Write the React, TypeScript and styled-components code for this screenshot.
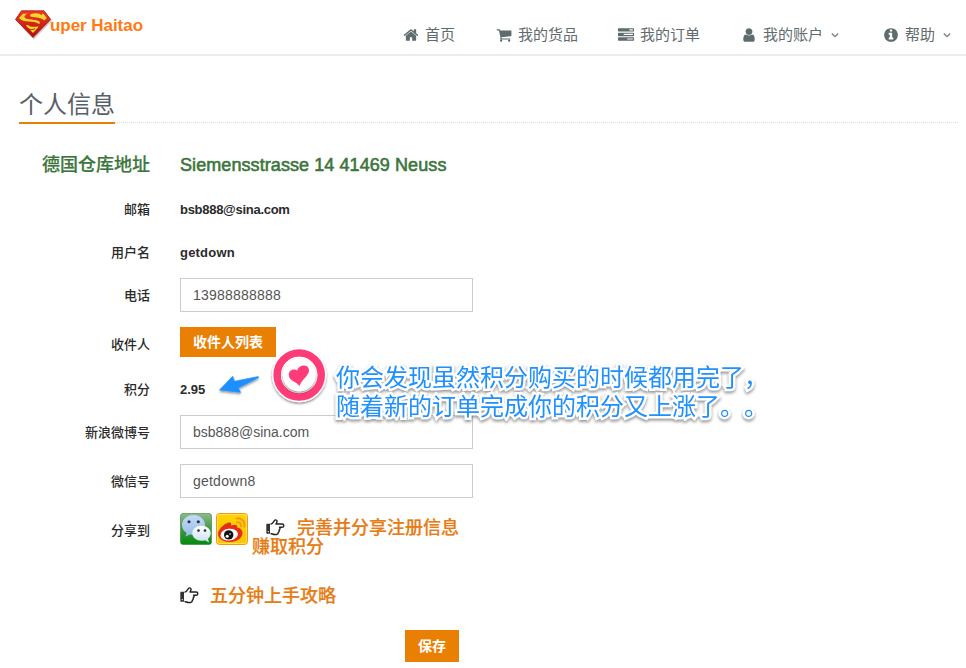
import React from "react";
import styled, { createGlobalStyle, css } from "styled-components";

const Global = createGlobalStyle`
  * { box-sizing: border-box; }
  body {
    margin: 0;
    background: #fff;
    color: #2a2a2a;
    font-family: "Liberation Sans", "Noto Sans CJK SC", sans-serif;
    overflow: hidden;
  }
`;

const Page = styled.div`
  position: relative;
  width: 966px;
  height: 668px;
  overflow: hidden;
`;

const Header = styled.header`
  display: flex;
  justify-content: space-between;
  height: 56px;
  border-bottom: 2px solid #ececec;
`;

const Brand = styled.a`
  display: flex;
  align-items: flex-start;
  padding: 9px 0 0 14px;
`;

const BrandName = styled.span`
  margin: 7px 0 0 -2px;
  font-size: 17px;
  line-height: 20px;
  font-weight: 700;
  letter-spacing: -0.05px;
  color: #ff7a12;
`;

const Nav = styled.nav`
  display: flex;
  align-items: center;
  height: 38px;
  margin-top: 16px;
  padding-right: 15px;
`;

const NavItem = styled.a<{ $gap: number }>`
  display: flex;
  align-items: center;
  margin-left: ${(p) => p.$gap}px;
  font-size: 15px;
  line-height: 20px;
  color: #5f6b6d;
  white-space: nowrap;

  svg { display: block; flex: none; }
  svg:last-child:not(:first-child) { margin-left: 8px; }
`;

const NavIcon = styled.svg`
  width: 16px;
  height: 16px;
  margin: -1px 6px 0 0;
  fill: #5f6b6d;
`;

const Headline = styled.div`
  display: flex;
  height: 38px;
  margin: 30px 7px 0 19px;
  background: linear-gradient(90deg, #dcdcdc 50%, transparent 50%) 0 36px / 2px 1px repeat-x;
`;

const Title = styled.h2`
  margin: 0;
  height: 38px;
  border-bottom: 2px solid #e98003;
  font-size: 24px;
  line-height: 37px;
  font-weight: 400;
  color: #585f69;
`;

const Form = styled.form`
  display: flex;
  flex-direction: column;
  gap: 15px;
  padding-top: 29px;
`;

const Row = styled.div<{ $height: number }>`
  display: grid;
  grid-template-columns: 150px 293px;
  column-gap: 30px;
  height: ${(p) => p.$height}px;
`;

const address = css`
  padding-top: 0;
  font-size: 18px;
  line-height: 24px;
  font-weight: 500;
  color: #3c763d;
`;

const Label = styled.label<{ $address?: boolean }>`
  padding-top: 7px;
  text-align: right;
  font-size: 13px;
  line-height: 21px;
  font-weight: 500;
  white-space: nowrap;
  ${(p) => p.$address && address}
  ${(p) => p.$address && "-webkit-text-stroke: 0.2px #3c763d;"}
`;

const Value = styled.p<{ $address?: boolean; $spacing?: number }>`
  margin: 0;
  padding-top: 7px;
  font-size: 13px;
  line-height: 21px;
  font-weight: 700;
  white-space: nowrap;
  ${(p) => p.$address && address}
  ${(p) => p.$address && "-webkit-text-stroke: 0.6px #3c763d;"}
  letter-spacing: ${(p) => p.$spacing ?? 0}px;
`;

const Input = styled.input<{ $spacing?: number }>`
  width: 293px;
  height: 34px;
  padding: 0 12px;
  border: 1px solid #ccc;
  border-radius: 0;
  outline: 0;
  font: 14px "Liberation Sans", sans-serif;
  letter-spacing: ${(p) => p.$spacing ?? 0.22}px;
  color: #555;
`;

const Button = styled.button<{ $width: number; $height: number }>`
  width: ${(p) => p.$width}px;
  height: ${(p) => p.$height}px;
  padding: 0 0 2px;
  border: 0;
  background: #e98003;
  color: #fff;
  font: 700 14px/20px "Noto Sans CJK SC", sans-serif;
  white-space: nowrap;
`;

const Share = styled.div`
  display: flex;
  gap: 4px;
  width: 300px;
  > svg { flex: none; display: block; }
`;

const tipText = css`
  font-size: 18px;
  line-height: 19px;
  font-weight: 500;
  color: #e67c14;
  -webkit-text-stroke: 0.2px #e67c14;
  white-space: nowrap;
`;

const Tip = styled.div`
  padding-top: 5px;
  ${tipText}
`;

const TipLine = styled.div<{ $indent?: number }>`
  display: flex;
  align-items: center;
  height: 19px;
  padding-left: ${(p) => p.$indent ?? 0}px;
  svg { flex: none; margin-right: 12px; }
`;

const TipText = styled.span`
  padding-top: 2px;
`;

const Guide = styled.div`
  padding: 26px 0 0 180px;
  ${tipText}
  svg { margin-right: 11px; }
`;

const Actions = styled.div`
  display: flex;
  justify-content: flex-end;
  width: 459px;
  padding-top: 10px;
`;

const Callout = styled.div`
  position: absolute;
  left: 336px;
  top: 363px;
  font-size: 24px;
  line-height: 29px;
  color: #1e90ff;
  white-space: nowrap;
  text-spacing-trim: space-all;
  -webkit-text-stroke: 5px #fff;
  paint-order: stroke fill;
  filter: drop-shadow(0 2px 1.5px rgba(0, 0, 0, 0.4));
`;

const Marks = styled.svg`
  position: absolute;
  left: 210px;
  top: 340px;
  overflow: visible;
`;

const icons = {
  home: "M1472 992v480q0 26-19 45t-45 19h-384v-384h-256v384h-384q-26 0-45-19t-19-45v-480q0-1 .5-3t.5-3l575-474 575 474q1 2 1 6zm223-69l-62 74q-8 9-21 11h-3q-13 0-21-7l-692-577-692 577q-12 8-24 7-13-2-21-11l-62-74q-8-10-7-23.5t11-21.5l719-599q32-26 76-26t76 26l244 204v-195q0-14 9-23t23-9h192q14 0 23 9t9 23v408l219 182q10 8 11 21.5t-7 23.5z",
  cart: "M704 1536q0 52-38 90t-90 38-90-38-38-90 38-90 90-38 90 38 38 90zm896 0q0 52-38 90t-90 38-90-38-38-90 38-90 90-38 90 38 38 90zm128-1088v512q0 24-16.5 42.5t-40.5 21.5l-1044 122q13 60 13 70 0 16-24 64h920q26 0 45 19t19 45-19 45-45 19h-1024q-26 0-45-19t-19-45q0-11 8-31.5t16-36 21.5-40 15.5-29.5l-177-823h-204q-26 0-45-19t-19-45 19-45 45-19h256q16 0 28.5 6.5t19.5 15.5 13 24.5 8 26 5.5 29.5 4.5 26h1201q26 0 45 19t19 45z",
  tasks: "M1024 1408h640v-128h-640v128zm-384-512h1024v-128h-1024v128zm640-512h384v-128h-384v128zm512 832v256q0 26-19 45t-45 19h-1664q-26 0-45-19t-19-45v-256q0-26 19-45t45-19h1664q26 0 45 19t19 45zm0-512v256q0 26-19 45t-45 19h-1664q-26 0-45-19t-19-45v-256q0-26 19-45t45-19h1664q26 0 45 19t19 45zm0-512v256q0 26-19 45t-45 19h-1664q-26 0-45-19t-19-45v-256q0-26 19-45t45-19h1664q26 0 45 19t19 45z",
  user: "M1536 1399q0 109-62.5 187t-150.5 78h-854q-88 0-150.5-78t-62.5-187q0-85 8.5-160.5t31.5-152 58.5-131 94-89 134.5-34.5q131 128 313 128t313-128q76 0 134.5 34.5t94 89 58.5 131 31.5 152 8.5 160.5zm-256-887q0 159-112.5 271.5t-271.5 112.5-271.5-112.5-112.5-271.5 112.5-271.5 271.5-112.5 271.5 112.5 112.5 271.5z",
  info: "M1152 1376v-160q0-14-9-23t-23-9h-96v-512q0-14-9-23t-23-9h-320q-14 0-23 9t-9 23v160q0 14 9 23t23 9h96v320h-96q-14 0-23 9t-9 23v160q0 14 9 23t23 9h448q14 0 23-9t9-23zm-128-896v-160q0-14-9-23t-23-9h-192q-14 0-23 9t-9 23v160q0 14 9 23t23 9h192q14 0 23-9t9-23zm640 416q0 209-103 385.5t-279.5 279.5-385.5 103-385.5-103-279.5-279.5-103-385.5 103-385.5 279.5-279.5 385.5-103 385.5 103 279.5 279.5 103 385.5z",
};

const nav: { icon: keyof typeof icons; label: string; gap: number; menu?: boolean }[] = [
  { icon: "home", label: "首页", gap: 0 },
  { icon: "cart", label: "我的货品", gap: 41 },
  { icon: "tasks", label: "我的订单", gap: 40 },
  { icon: "user", label: "我的账户", gap: 41, menu: true },
  { icon: "info", label: "帮助", gap: 44, menu: true },
];

const Chevron = () => (
  <svg width="8" height="8" viewBox="0 0 8 8">
    <path d="M.8 2.500 4 5.700 7.200 2.500" fill="none" stroke="#6f797b" strokeWidth="1.1" />
  </svg>
);

const Hand = () => (
  <svg width="19" height="17" viewBox="0 0 19 17">
    <path
      d="M4.500 5.300C6.500 5.100 7.800 2.200 8.600 1.300c1-.9 2.600-.1 2.400 1.300-.1 1-.8 1.600-1 2.400h6c2.400 0 2.400 3.300 0 3.300h-2.500c.9 1 .5 2.300-.4 2.700.4 1-.1 2-.9 2.300.2 1.300-.6 2.200-2 2.200H8.500c-1.600 0-2.500-1-4-1"
      fill="none"
      stroke="#222"
      strokeWidth="1.400"
      strokeLinejoin="round"
    />
    <path d="M1.300 4.700h2.700v10H1.300c-.6 0-1-.4-1-1v-8c0-.6.4-1 1-1z" fill="#333" />
    <circle cx="2.300" cy="12.600" r=".7" fill="#fff" />
  </svg>
);

const Shield = () => (
  <svg width="38" height="31" viewBox="0 0 38 31">
    <defs>
      <linearGradient id="shield" x1="0" y1="0" x2="0" y2="1">
        <stop offset="0" stopColor="#f03a24" />
        <stop offset="1" stopColor="#b00d0d" />
      </linearGradient>
    </defs>
    <path d="M8.500 3h22.500l7 9L20 30.500 2.500 12z" fill="#999" opacity=".45" />
    <path d="M7.500 1.800h22.500l6.700 8.700L19 28.500 1.500 10.500z" fill="url(#shield)" stroke="#a81010" strokeWidth=".8" />
    <path d="M9 4.700h4.500c-2.600 1-3.800 2.700-2.600 4.100 2 2.200 12 1.400 14.600 3.900.9.900.3 1.700-.6 2.200-2.500-2-6-2-10.500-2.300-4.600-.4-7.800-1.600-9.400-3.600z" fill="#f2d62c" />
    <path d="M18 4.800c4-1.100 8-.4 9.500 1.500l.8-1.600h1.200l3.300 4.400-2.500 2.500C27.500 8.700 22 8.400 17.500 7.800c-2.200-.6-1.700-2.300.5-3z" fill="#f2d62c" />
    <path d="M11.800 16.600l2-.9c1.700 2.200 6.700 2.600 9.700 1.700l1.200.3-5.700 6.300z" fill="#f2d62c" />
    <path d="M13.500 19.500c2.500 1.300 5.500 1.300 7.500.2" fill="none" stroke="#c51313" strokeWidth="1" />
  </svg>
);

const WeChat = () => (
  <svg width="32" height="32" viewBox="0 0 32 32">
    <defs>
      <linearGradient id="wg" x1="0" y1="0" x2="0" y2="1">
        <stop offset="0" stopColor="#91b98c" />
        <stop offset=".5" stopColor="#3f9844" />
        <stop offset="1" stopColor="#058a0b" />
      </linearGradient>
      <linearGradient id="wb" x1="0" y1="0" x2="0" y2="1">
        <stop offset="0" stopColor="#c4daf8" />
        <stop offset="1" stopColor="#9abce4" />
      </linearGradient>
      <linearGradient id="ww" x1="0" y1="0" x2="0" y2="1">
        <stop offset="0" stopColor="#fff" />
        <stop offset="1" stopColor="#c9dff0" />
      </linearGradient>
    </defs>
    <rect x=".5" y=".5" width="31" height="31" rx="2.500" fill="url(#wg)" stroke="#35833a" strokeOpacity=".6" />
    <path d="M13.500 2C7 2 2 6.500 2 12c0 3.500 2 6.200 4.600 8L5.500 23.500 10 21.400c1.200.3 2.300.4 3.500.4C20 21.800 25 17.500 25 12S20 2 13.500 2z" fill="url(#wb)" />
    <path d="M21.500 12.800c-5.200 0-9.200 3.300-9.200 7.500s4 7.500 9.200 7.500c1.300 0 2.500-.2 3.600-.6l3.900 2.300-1-3.700c1.800-1.400 2.700-3.300 2.700-5.500 0-4.200-4-7.500-9.200-7.500z" fill="url(#ww)" />
    <g fill="#28313b">
      <circle cx="9" cy="8.800" r="1.500" /><circle cx="18.300" cy="8.800" r="1.500" />
      <circle cx="18.500" cy="17.600" r="1.300" /><circle cx="25" cy="17.600" r="1.300" />
    </g>
  </svg>
);

const Weibo = () => (
  <svg width="32" height="32" viewBox="0 0 32 32">
    <defs>
      <linearGradient id="wy" x1="0" y1="0" x2="0" y2="1">
        <stop offset="0" stopColor="#ffd400" />
        <stop offset="1" stopColor="#ffc400" />
      </linearGradient>
    </defs>
    <rect x=".5" y=".5" width="31" height="31" rx="3" fill="url(#wy)" stroke="#f09a12" />
    <rect x="1.500" y="1.500" width="29" height="29" rx="2" fill="none" stroke="#ffe05a" />
    <path d="M20.500 5.500c5-1 9 3 7.800 8.200M21 9.300c2.500-.5 4.500 1.400 3.900 4" fill="none" stroke="#f59a18" strokeWidth="2" strokeLinecap="round" />
    <path d="M11.500 10c3-1.300 4.200 0 3.600 2.600 3.500-1.500 7-1.400 6 1.900 3 .5 5.400 2.300 5.400 5.300C26.500 25.500 20.500 29 14 29S2 25.800 2 21c0-4 5-9.400 9.500-11z" fill="#e62c1b" />
    <ellipse cx="13.200" cy="21.600" rx="8.800" ry="5.900" fill="#fff" transform="rotate(-7 13.200 21.600)" />
    <circle cx="12.700" cy="21.900" r="4.700" fill="#111" />
    <circle cx="11.200" cy="23.200" r="1.500" fill="#fff" /><circle cx="14" cy="21" r=".8" fill="#fff" />
  </svg>
);

const Annotation = () => (
  <>
    <Marks width="120" height="70" viewBox="210 340 120 70">
      <defs>
        <filter id="lift" x="-20%" y="-20%" width="140%" height="150%">
          <feDropShadow dx="0" dy="1.500" stdDeviation="1.200" floodOpacity=".45" />
        </filter>
      </defs>
      <path d="M219.500 390 232.700 376.300l1.800 5L258.300 376.500v1.300L238.300 388l2.400 4.400z" fill="#1e90ff" stroke="#1e90ff" strokeWidth=".6" strokeLinejoin="round" filter="url(#lift)" />
      <g filter="url(#lift)">
        <circle cx="299.200" cy="375" r="27.300" fill="#fff" />
      </g>
      <circle cx="299.200" cy="375" r="22" fill="none" stroke="#ff3b78" strokeWidth="7.600" />
      <circle cx="299.200" cy="375" r="18.200" fill="#fff" />
      <circle cx="299.200" cy="375" r="16.300" fill="#fff" filter="url(#lift)" />
      <path d="M299.500 386.300C297 381.500 289 381.500 288.800 374.800c-.1-4.800 5.300-6.600 8.400-4.300 1.500-5 9-6.800 11.200-2.400 3 6.600-6.500 10.400-8.900 18.200z" fill="#ff3b78" />
    </Marks>
    <Callout>
      <div>你会发现虽然积分购买的时候都用完了，</div>
      <div>随着新的订单完成你的积分又上涨了。。</div>
    </Callout>
  </>
);

export default function App() {
  return (
    <Page>
      <Global />
      <Header>
        <Brand>
          <Shield />
          <BrandName>uper Haitao</BrandName>
        </Brand>
        <Nav>
          {nav.map((item) => (
            <NavItem key={item.icon} $gap={item.gap}>
              <NavIcon viewBox="0 0 1792 1792"><path d={icons[item.icon]} /></NavIcon>
              {item.label}
              {item.menu && <Chevron />}
            </NavItem>
          ))}
        </Nav>
      </Header>
      <Headline><Title>个人信息</Title></Headline>
      <Form>
        <Row $height={24}>
          <Label $address>德国仓库地址</Label>
          <Value $address $spacing={0.08}>Siemensstrasse 14 41469 Neuss</Value>
        </Row>
        <Row $height={28}><Label>邮箱</Label><Value $spacing={-0.28}>bsb888@sina.com</Value></Row>
        <Row $height={28}><Label>用户名</Label><Value $spacing={0.2}>getdown</Value></Row>
        <Row $height={34}><Label>电话</Label><Input defaultValue="13988888888" /></Row>
        <Row $height={30}>
          <Label>收件人</Label>
          <Button type="button" $width={96} $height={30}>收件人列表</Button>
        </Row>
        <Row $height={28}><Label>积分</Label><Value>2.95</Value></Row>
        <Row $height={34}><Label>新浪微博号</Label><Input $spacing={0} defaultValue="bsb888@sina.com" /></Row>
        <Row $height={34}><Label>微信号</Label><Input defaultValue="getdown8" /></Row>
        <Row $height={32}>
          <Label>分享到</Label>
          <Share>
            <WeChat />
            <Weibo />
            <Tip>
              <TipLine $indent={14}><Hand /><TipText>完善并分享注册信息</TipText></TipLine>
              <TipLine><TipText>赚取积分</TipText></TipLine>
            </Tip>
          </Share>
        </Row>
        <Guide><TipLine><Hand /><TipText>五分钟上手攻略</TipText></TipLine></Guide>
        <Actions><Button type="button" $width={54} $height={32}>保存</Button></Actions>
      </Form>
      <Annotation />
    </Page>
  );
}
